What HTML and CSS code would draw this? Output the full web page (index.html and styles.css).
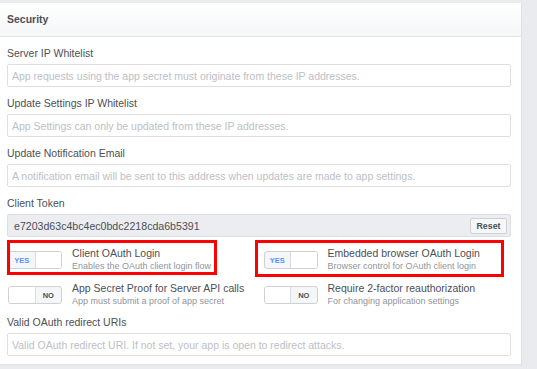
FILE: index.html
```html
<!DOCTYPE html>
<html>
<head>
<meta charset="utf-8">
<link rel="stylesheet" href="styles.css">
</head>
<body>
<div class="card">
  <div class="card-header">Security</div>
  <div class="card-body">
    <div class="field">
      <div class="label">Server IP Whitelist</div>
      <input class="text-input" type="text" placeholder="App requests using the app secret must originate from these IP addresses.">
    </div>
    <div class="field">
      <div class="label">Update Settings IP Whitelist</div>
      <input class="text-input" type="text" placeholder="App Settings can only be updated from these IP addresses.">
    </div>
    <div class="field">
      <div class="label">Update Notification Email</div>
      <input class="text-input" type="text" placeholder="A notification email will be sent to this address when updates are made to app settings.">
    </div>
    <div class="field">
      <div class="label">Client Token</div>
      <div class="token">
        <span class="token-value">e7203d63c4bc4ec0bdc2218cda6b5391</span>
        <button class="reset-btn">Reset</button>
      </div>
    </div>
    <div class="toggle-grid">
      <div class="setting highlight-left">
        <div class="toggle on"><span class="seg label-seg">YES</span><span class="seg knob"></span></div>
        <div class="setting-text">
          <div class="setting-title">Client OAuth Login</div>
          <div class="setting-sub">Enables the OAuth client login flow</div>
        </div>
      </div>
      <div class="setting highlight-right">
        <div class="toggle on"><span class="seg label-seg">YES</span><span class="seg knob"></span></div>
        <div class="setting-text">
          <div class="setting-title">Embedded browser OAuth Login</div>
          <div class="setting-sub">Browser control for OAuth client login</div>
        </div>
      </div>
      <div class="setting">
        <div class="toggle off"><span class="seg knob"></span><span class="seg label-seg">NO</span></div>
        <div class="setting-text">
          <div class="setting-title">App Secret Proof for Server API calls</div>
          <div class="setting-sub">App must submit a proof of app secret</div>
        </div>
      </div>
      <div class="setting">
        <div class="toggle off"><span class="seg knob"></span><span class="seg label-seg">NO</span></div>
        <div class="setting-text">
          <div class="setting-title">Require 2-factor reauthorization</div>
          <div class="setting-sub">For changing application settings</div>
        </div>
      </div>
    </div>
    <div class="field last">
      <div class="label">Valid OAuth redirect URIs</div>
      <input class="text-input" type="text" placeholder="Valid OAuth redirect URI. If not set, your app is open to redirect attacks.">
    </div>
  </div>
</div>
</body>
</html>
```
FILE: styles.css
```css
html, body {
  margin: 0;
  padding: 0;
}
body {
  background: #e9ebee;
  font-family: "Liberation Sans", Arial, sans-serif;
  font-size: 10.5px;
  color: #4b4f56;
  padding-top: 3px;
}
.card {
  width: 521px;
  background: #fff;
  border-right: 1px solid #dfe1e5;
  border-bottom: 1px solid #dfe1e5;
  box-sizing: content-box;
}
.card-header {
  height: 33px;
  line-height: 33px;
  padding-left: 7px;
  font-weight: bold;
  color: #4b4f56;
  background: linear-gradient(#ffffff, #f5f6f7);
  border-bottom: 1px solid #e5e6e9;
}
.card-body {
  padding: 10px 10px 8px 7px;
}
.field {
  margin-bottom: 10px;
}
.field.last {
  margin-bottom: 0;
}
.label {
  line-height: 12px;
  height: 12px;
  margin-bottom: 5px;
  color: #4b4f56;
}
.text-input {
  display: block;
  box-sizing: border-box;
  width: 100%;
  height: 23px;
  margin: 0;
  padding: 0 4px;
  border: 1px solid #dddfe2;
  border-radius: 2px;
  font-family: inherit;
  font-size: 10.5px;
  color: #4b4f56;
  background: #fff;
  outline: none;
}
.text-input::placeholder {
  color: #bcc0c6;
}
.token {
  box-sizing: border-box;
  height: 23px;
  display: flex;
  align-items: center;
  justify-content: space-between;
  padding: 0 3px 0 6px;
  background: #ebedf0;
  border: 1px solid #dddfe2;
  border-radius: 2px;
}
.token-value {
  color: #4b4f56;
  font-size: 10.6px;
}
.reset-btn {
  height: 16px;
  width: 37px;
  padding: 0;
  font-family: inherit;
  font-size: 8.8px;
  font-weight: bold;
  color: #4b4f56;
  background: #f6f7f9;
  border: 1px solid #ced0d4;
  border-radius: 2px;
}
.toggle-grid {
  display: grid;
  grid-template-columns: 1fr 1fr;
  column-gap: 7px;
  row-gap: 10px;
  margin-bottom: 9px;
}
.setting {
  position: relative;
  display: flex;
  align-items: flex-start;
  padding-left: 1px;
}
.toggle {
  box-sizing: border-box;
  width: 54px;
  height: 18px;
  margin-top: 4px;
  margin-right: 10px;
  flex: none;
  display: flex;
  border: 1px solid #ced0d4;
  border-radius: 3px;
  background: #f5f6f7;
  overflow: hidden;
}
.seg {
  flex: 1;
  display: flex;
  align-items: center;
  justify-content: center;
  font-size: 7.5px;
  font-weight: bold;
}
.toggle.on .label-seg {
  color: #5890ff;
}
.toggle.off .label-seg {
  color: #4b4f56;
}
.knob {
  background: #fff;
}
.toggle.on .knob {
  border-left: 1px solid #dadde1;
}
.toggle.off .knob {
  border-right: 1px solid #dadde1;
}
.setting-title {
  line-height: 12px;
  color: #4b4f56;
}
.setting-sub {
  margin-top: 2px;
  line-height: 11px;
  font-size: 9px;
  color: #90949c;
}
.highlight-left::after,
.highlight-right::after {
  content: "";
  position: absolute;
  border: 3px solid #ff0000;
  box-sizing: border-box;
  pointer-events: none;
}
.highlight-left::after {
  left: 0;
  top: -7px;
  width: 210px;
  height: 35px;
}
.highlight-right::after {
  left: -8px;
  top: -7px;
  width: 249px;
  height: 37px;
}
```
